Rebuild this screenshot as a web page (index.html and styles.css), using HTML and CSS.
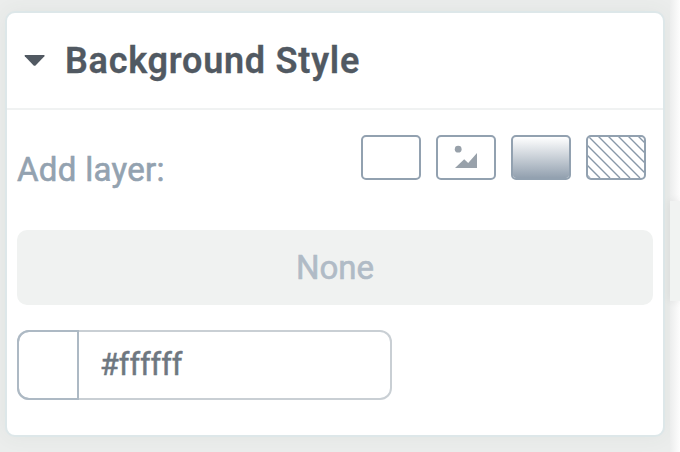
FILE: index.html
```html
<!DOCTYPE html>
<html lang="en">
<head>
<meta charset="utf-8">
<title>Background Style</title>
<link rel="stylesheet" href="styles.css">
</head>
<body>
<main class="sidebar">
  <section class="panel">
    <header class="panel-header">
      <svg class="caret" width="22" height="12" viewBox="0 0 22 12"><path d="M1.2 0H20Q21.2 .3 20.4 1.3L11.8 10.2Q10.6 11.4 9.4 10.2L.8 1.3Q0 .3 1.2 0Z" fill="#515962"/></svg>
      <h1 class="title">Background Style</h1>
    </header>
    <div class="panel-body">
      <div class="layer-row">
        <span class="layer-label">Add layer:</span>
        <div class="layer-buttons">
          <button class="layer-button" aria-label="Color"></button>
          <button class="layer-button" aria-label="Image">
            <svg width="56" height="41" viewBox="0 0 56 41"><g fill="#98a1aa"><circle cx="20.2" cy="12.2" r="3.4"/><path d="M17 31L26.2 22.2L30.2 26L39 16V31Z"/></g></svg>
          </button>
          <button class="layer-button gradient" aria-label="Gradient"></button>
          <button class="layer-button" aria-label="Pattern">
            <svg width="56" height="41" viewBox="0 0 56 41"><path d="M-40-1L2 41M-30-1L12 41M-20-1L22 41M-10-1L32 41M0-1L42 41M10-1L52 41M20-1L62 41M30-1L72 41M40-1L82 41M50-1L92 41" stroke="#8898a8" stroke-width="1.4"/></svg>
          </button>
        </div>
      </div>
      <div class="empty"><span class="empty-text">None</span></div>
      <div class="color-field">
        <span class="swatch"></span>
        <span class="color-value">#ffffff</span>
      </div>
    </div>
  </section>
</main>
<aside class="edge"><div class="edge-tab"></div></aside>
</body>
</html>
```
FILE: styles.css
```css
* { box-sizing: border-box; }
body {
  margin: 0;
  width: 680px;
  height: 452px;
  display: flex;
  overflow: hidden;
  font-family: Roboto, "Liberation Sans", sans-serif;
  background: #fff;
}
.sidebar {
  width: 670px;
  height: 452px;
  padding: 11px 5px 0;
  background: #ebedec;
}
.panel {
  width: 660px;
  height: 426px;
  border: 2px solid #dde7e9;
  border-radius: 10px;
  background: #fff;
  box-shadow: 0 0 20px rgba(70, 80, 75, .06);
}
.panel-header {
  height: 97px;
  padding-left: 17px;
  border-bottom: 2px solid #f0f2f2;
  display: flex;
  align-items: center;
}
.caret { display: block; margin-right: 19px; }
.title {
  margin: 0;
  font-size: 36px;
  line-height: 42px;
  font-weight: 600;
  letter-spacing: .75px;
  color: #515962;
  -webkit-text-stroke: .3px #515962;
  white-space: nowrap;
}
.panel-body { padding: 25px 10px 0; }
.layer-row {
  height: 95px;
  padding-right: 7px;
  display: flex;
  justify-content: space-between;
}
.layer-label {
  margin-top: 15px;
  font-size: 33px;
  line-height: 40px;
  letter-spacing: .3px;
  color: #93a2b0;
  -webkit-text-stroke: .6px #93a2b0;
}
.layer-buttons { display: flex; gap: 15px; }
.layer-button {
  width: 60px;
  height: 45px;
  padding: 0;
  border: 2px solid #92a1b0;
  border-radius: 5px;
  background: #fff;
  overflow: hidden;
}
.layer-button svg { display: block; }
.gradient { background: linear-gradient(#fff, #92a0af) padding-box; }
.empty {
  height: 75px;
  border-radius: 10px;
  background: #f0f2f1;
  display: flex;
  align-items: center;
  justify-content: center;
}
.empty-text {
  font-size: 33px;
  line-height: 40px;
  color: #b0bbc6;
  -webkit-text-stroke: .6px #b0bbc6;
}
.color-field {
  width: 375px;
  height: 70px;
  margin-top: 25px;
  border-radius: 12px;
  box-shadow: inset 0 0 0 2px #c9cfd4;
  display: flex;
}
.swatch {
  width: 62px;
  border: 2px solid #adb9c4;
  border-radius: 12px 0 0 12px;
}
.color-value {
  margin-left: 21px;
  font-size: 30.5px;
  line-height: 69px;
  color: #6e7780;
  -webkit-text-stroke: .5px #6e7780;
}
.edge {
  width: 10px;
  padding-top: 201px;
  background: linear-gradient(90deg, #eceded, #fafafa 80%, #fdfdfd);
}
.edge-tab { height: 100px; background: #f1f3f2; box-shadow: 0 0 8px rgba(0, 0, 0, .08); }
```
